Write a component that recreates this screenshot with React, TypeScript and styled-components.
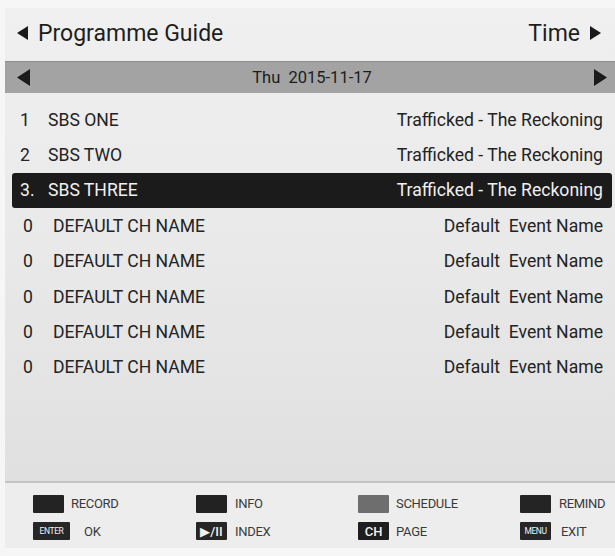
import styled, { createGlobalStyle } from 'styled-components';

const GlobalStyle = createGlobalStyle`
  html, body {
    margin: 0;
    padding: 0;
    background: #f6f6f6;
  }
  body {
    font-family: Roboto, "Noto Sans", "Liberation Sans", sans-serif;
  }
`;

const Screen = styled.div`
  width: 615px;
  height: 556px;
  padding: 8px 0 0 5px;
  box-sizing: border-box;
  background: #f6f6f6;
`;
const Panel = styled.div`
  height: 540px;
  display: flex;
  flex-direction: column;
  background: linear-gradient(#f0f0f0, #e9e9e9 45%, #e0e0e0 88%);
`;
const Header = styled.div`
  height: 53px;
  display: flex;
  align-items: center;
  justify-content: space-between;
  padding: 0 14px 3px 12px;
  box-sizing: border-box;
  color: #1e1e1e;
  font-size: 23px;
`;
const HeaderSide = styled.div`
  display: flex;
  align-items: center;
  gap: 10px;
`;
const DateBar = styled.div`
  height: 32px;
  display: flex;
  align-items: center;
  justify-content: space-between;
  padding: 0 8px 0 12px;
  background: #a3a3a3;
  border-top: 1px solid #8e8e8e;
  box-sizing: border-box;
  color: #1c1c1c;
  font-size: 16.5px;
`;
const DateText = styled.span`
  white-space: pre;
`;
const List = styled.div`
  padding-top: 9px;
  flex: 1;
  display: flex;
  flex-direction: column;
`;
const Row = styled.div<{ $active?: boolean }>`
  height: 35.4px;
  margin: 0 3px 0 7px;
  display: flex;
  align-items: center;
  padding-right: 9px;
  border-radius: 3px;
  font-size: 17.6px;
  color: ${(p) => (p.$active ? '#f0f0f0' : '#232323')};
  background: ${(p) => (p.$active ? '#1b1b1b' : 'transparent')};
`;
const Num = styled.span<{ $indent: number; $width: number }>`
  box-sizing: border-box;
  padding-left: ${(p) => p.$indent}px;
  width: ${(p) => p.$width}px;
  flex: none;
`;
const Name = styled.span`
  flex: 1;
`;
const Event = styled.span`
  flex: none;
  white-space: pre;
`;
const Footer = styled.div`
  height: 67px;
  border-top: 2px solid #c3c3c3;
  background: #ededed;
  display: grid;
  grid-template-columns: 163px 162px 162px 1fr;
  grid-template-rows: 27px 28px;
  padding: 7px 0 0 28px;
  box-sizing: border-box;
  align-items: center;
`;
const Key = styled.div`
  display: flex;
  align-items: center;
  font-size: 13px;
  letter-spacing: -0.3px;
  color: #3a3a3a;
`;
const Swatch = styled.span<{ $color: string; $w?: number; $gap?: number }>`
  width: ${(p) => p.$w ?? 31}px;
  height: 18px;
  margin-right: ${(p) => p.$gap ?? 7}px;
  background: ${(p) => p.$color};
  border-radius: 1px;
  display: flex;
  align-items: center;
  justify-content: center;
  color: #f2f2f2;
  font-size: 8.5px;
  letter-spacing: -0.4px;
  flex: none;
`;
const BigKeyText = styled.span`
  font-size: 13px;
  font-weight: 500;
  letter-spacing: 0;
`;

function Tri({ dir, w, h }: { dir: 'l' | 'r'; w: number; h: number }) {
  const pts = dir === 'l' ? `${w},0 ${w},${h} 0,${h / 2}` : `0,0 0,${h} ${w},${h / 2}`;
  return (
    <svg width={w} height={h} viewBox={`0 0 ${w} ${h}`}>
      <polygon points={pts} fill="#1a1a1a" />
    </svg>
  );
}

const channels = [
  { n: '1', name: 'SBS ONE', ev: 'Trafficked - The Reckoning' },
  { n: '2', name: 'SBS TWO', ev: 'Trafficked - The Reckoning' },
  { n: '3.', name: 'SBS THREE', ev: 'Trafficked - The Reckoning', active: true },
  { n: '0', name: 'DEFAULT CH NAME', ev: 'Default  Event Name' },
  { n: '0', name: 'DEFAULT CH NAME', ev: 'Default  Event Name' },
  { n: '0', name: 'DEFAULT CH NAME', ev: 'Default  Event Name' },
  { n: '0', name: 'DEFAULT CH NAME', ev: 'Default  Event Name' },
  { n: '0', name: 'DEFAULT CH NAME', ev: 'Default  Event Name' },
];

export default function App() {
  return (
    <Screen>
      <GlobalStyle />
      <Panel>
        <Header>
          <HeaderSide>
            <Tri dir="l" w={11} h={14} />
            <span>Programme Guide</span>
          </HeaderSide>
          <HeaderSide>
            <span>Time</span>
            <Tri dir="r" w={11} h={14} />
          </HeaderSide>
        </Header>
        <DateBar>
          <Tri dir="l" w={13} h={17} />
          <DateText>Thu  2015-11-17</DateText>
          <Tri dir="r" w={13} h={17} />
        </DateBar>
        <List>
          {channels.map((c, i) => {
            const def = c.n === '0';
            return (
              <Row key={i} $active={c.active}>
                <Num $indent={def ? 11 : 8} $width={def ? 41 : 36}>{c.n}</Num>
                <Name>{c.name}</Name>
                <Event>{c.ev}</Event>
              </Row>
            );
          })}
        </List>
        <Footer>
          <Key><Swatch $color="#232323" />RECORD</Key>
          <Key><Swatch $color="#222" $gap={8} />INFO</Key>
          <Key><Swatch $color="#6e6e6e" />SCHEDULE</Key>
          <Key><Swatch $color="#242424" $gap={8} />REMIND</Key>
          <Key><Swatch $color="#262626" $w={37} $gap={14}>ENTER</Swatch>OK</Key>
          <Key><Swatch $color="#262626" $gap={8}><BigKeyText>▶/II</BigKeyText></Swatch>INDEX</Key>
          <Key><Swatch $color="#1e1e1e"><BigKeyText>CH</BigKeyText></Swatch>PAGE</Key>
          <Key><Swatch $color="#262626" $gap={10}>MENU</Swatch>EXIT</Key>
        </Footer>
      </Panel>
    </Screen>
  );
}
